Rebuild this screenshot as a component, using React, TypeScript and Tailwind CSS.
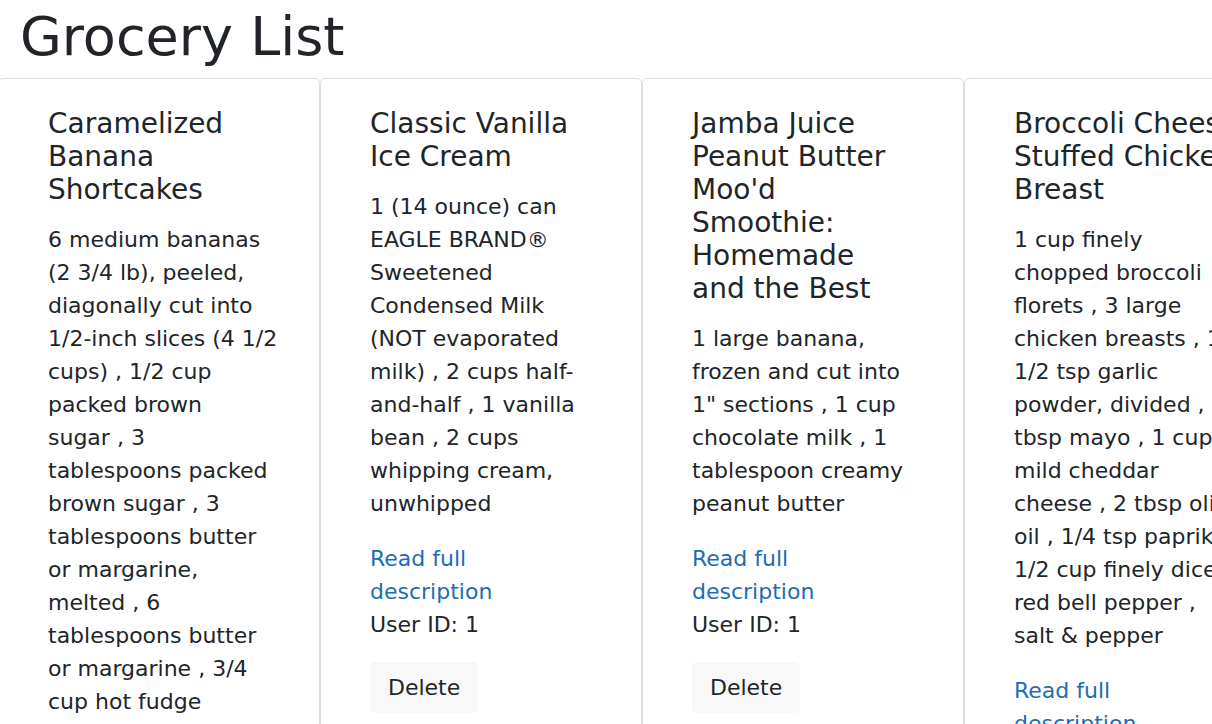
import React from "react";

type Recipe = {
  title: string[];
  body: string[];
  footer: boolean;
};

const recipes: Recipe[] = [
  {
    title: ["Caramelized", "Banana", "Shortcakes"],
    body: [
      "6 medium bananas",
      "(2 3/4 lb), peeled,",
      "diagonally cut into",
      "1/2-inch slices (4 1/2",
      "cups) , 1/2 cup",
      "packed brown",
      "sugar , 3",
      "tablespoons packed",
      "brown sugar , 3",
      "tablespoons butter",
      "or margarine,",
      "melted , 6",
      "tablespoons butter",
      "or margarine , 3/4",
      "cup hot fudge",
      "topping , 1 cup",
      "whipping cream",
    ],
    footer: true,
  },
  {
    title: ["Classic Vanilla", "Ice Cream"],
    body: [
      "1 (14 ounce) can",
      "EAGLE BRAND®",
      "Sweetened",
      "Condensed Milk",
      "(NOT evaporated",
      "milk) , 2 cups half-",
      "and-half , 1 vanilla",
      "bean , 2 cups",
      "whipping cream,",
      "unwhipped",
    ],
    footer: true,
  },
  {
    title: ["Jamba Juice", "Peanut Butter", "Moo'd", "Smoothie:", "Homemade", "and the Best"],
    body: [
      "1 large banana,",
      "frozen and cut into",
      "1\" sections , 1 cup",
      "chocolate milk , 1",
      "tablespoon creamy",
      "peanut butter",
    ],
    footer: true,
  },
  {
    title: ["Broccoli Cheese", "Stuffed Chicken", "Breast"],
    body: [
      "1 cup finely",
      "chopped broccoli",
      "florets , 3 large",
      "chicken breasts , 1",
      "1/2 tsp garlic",
      "powder, divided , 1",
      "tbsp mayo , 1 cup",
      "mild cheddar",
      "cheese , 2 tbsp olive",
      "oil , 1/4 tsp paprika ,",
      "1/2 cup finely diced",
      "red bell pepper ,",
      "salt & pepper",
    ],
    footer: true,
  },
];

function Lines({ lines }: { lines: string[] }) {
  return (
    <>
      {lines.map((l, i) => (
        <span key={i} className="block whitespace-nowrap">
          {l}
        </span>
      ))}
    </>
  );
}

function Card({ r }: { r: Recipe }) {
  return (
    <div className="w-[322px] shrink-0 rounded-[5px] border border-[#dedede] bg-white pl-[49px] pr-[20px] pt-[28px] pb-6">
      <h5 className="mb-[17px] text-[28px] font-normal leading-[33px] text-[#212529]">
        <Lines lines={r.title} />
      </h5>
      <p className="mb-[22px] text-[22px] leading-[33px] text-[#212529]">
        <Lines lines={r.body} />
      </p>
      {r.footer && (
        <>
          <div className="mb-[21px] text-[22px] leading-[33px] text-[#212529]">
            <a href="#" className="text-[#1d6db5]">
              <span className="block">Read full</span>
              <span className="block">description</span>
            </a>
            <div>User ID: 1</div>
          </div>
          <button className="rounded-[5px] bg-[#f8f8f8] px-[18px] py-[9px] text-[22px] leading-[33px] text-[#212529]">
            Delete
          </button>
        </>
      )}
    </div>
  );
}

export default function App() {
  return (
    <div
      className="h-screen w-full overflow-hidden bg-white text-[#212529]"
      style={{ fontFamily: '"DejaVu Sans", "Liberation Sans", sans-serif' }}
    >
      <h1 className="mb-[9px] pl-[20px] pt-[4px] text-[54px] font-normal leading-[65px] text-[#212529]">
        Grocery List
      </h1>
      <div className="-ml-[2px] flex items-start">
        {recipes.map((r, i) => (
          <Card key={i} r={r} />
        ))}
      </div>
    </div>
  );
}
